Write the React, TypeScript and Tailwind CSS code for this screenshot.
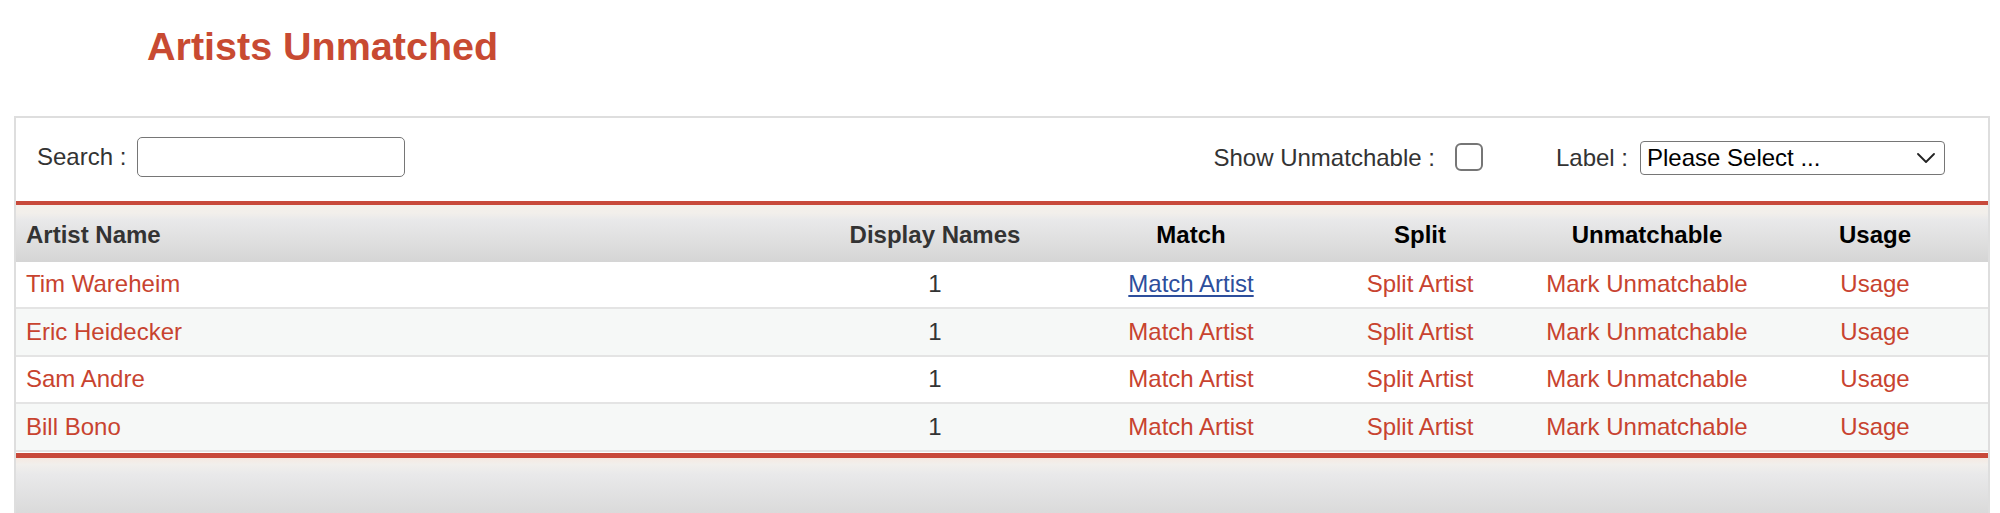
import React from "react";

type ArtistRow = {
  name: string;
  displayNames: number;
};

const ARTISTS: ArtistRow[] = [
  { name: "Tim Wareheim", displayNames: 1 },
  { name: "Eric Heidecker", displayNames: 1 },
  { name: "Sam Andre", displayNames: 1 },
  { name: "Bill Bono", displayNames: 1 },
];

const COLS = "grid grid-cols-[780px_278px_234px_224px_230px_226px]";
const LINK = "text-[#c8432f]";

export default function App() {
  return (
    <div className="h-[513px] w-[2000px] overflow-hidden bg-white font-['Liberation_Sans',Arial,sans-serif] text-[24px] text-[#333]">
      <h1 className="mt-[27px] pl-[147px] text-[39.5px] font-bold leading-none text-[#c84a32]">
        Artists Unmatched
      </h1>

      <div className="mt-[49px] ml-[14px] w-[1976px] border-2 border-b-0 border-[#dedede]">
        <Toolbar />
        <TableHeader />
        {ARTISTS.map((artist, i) => (
          <Row key={artist.name} artist={artist} index={i} />
        ))}
        <div className="mt-[1px] h-[70px] border-t-[5px] border-[#c8493a] bg-[linear-gradient(to_bottom,#f5e9e2_0%,#f1efec_10%,#e9e9ea_25%,#d6d6d6_100%)]" />
      </div>
    </div>
  );
}

function Toolbar() {
  return (
    <div className="flex h-[83px] items-center pr-[43px] pb-[4px] pl-[21px]">
      <span>Search :</span>
      <input
        type="text"
        className="ml-[11px] h-[40px] w-[268px] rounded-[5px] border-[1.5px] border-[#767676] bg-white outline-none"
      />
      <div className="flex-1" />
      <span className="mt-[1px]">Show Unmatchable :</span>
      <div className="ml-[20px] h-[28px] w-[28px] rounded-[6px] border-2 border-[#767676] bg-white" />
      <span className="ml-[73px] mt-[1px]">Label :</span>
      <div className="ml-[12px] mt-[2px] flex h-[34px] w-[305px] items-center rounded-[4px] border-[1.5px] border-[#767676] bg-white pr-[9px] pl-[6px] text-black">
        <span className="flex-1">Please Select ...</span>
        <svg width="18" height="10" viewBox="0 0 18 10" fill="none">
          <path
            d="M1 1l8 8 8-8"
            stroke="#222"
            strokeWidth="1.8"
            strokeLinecap="round"
            strokeLinejoin="round"
          />
        </svg>
      </div>
    </div>
  );
}

function TableHeader() {
  return (
    <div
      className={
        COLS +
        " h-[61px] border-t-4 border-[#c8493a] bg-[linear-gradient(to_bottom,#f4efe9_0%,#f2efeb_14%,#e9e9ea_26%,#d5d5d5_100%)] pt-[4px] font-bold"
      }
    >
      <div className="flex items-center pl-[10px] text-[#333]">Artist Name</div>
      <div className="flex items-center justify-center text-[#333]">
        Display Names
      </div>
      <div className="flex items-center justify-center text-black">Match</div>
      <div className="flex items-center justify-center text-black">Split</div>
      <div className="flex items-center justify-center text-black">
        Unmatchable
      </div>
      <div className="flex items-center justify-center text-black">Usage</div>
    </div>
  );
}

function Row(props: { artist: ArtistRow; index: number }) {
  const striped = props.index % 2 === 1;
  // the first row's match link is shown in its hovered state
  const hovered = props.index === 0;

  return (
    <div
      className={
        COLS +
        " border-b-2 border-[#e4e4e4] " +
        (striped ? "h-[48px] bg-[#f6f8f7]" : "h-[47px] bg-white")
      }
    >
      <div className={"flex items-center pl-[10px] " + LINK}>
        {props.artist.name}
      </div>
      <div className="flex items-center justify-center">
        {props.artist.displayNames}
      </div>
      <div className="flex items-center justify-center">
        {hovered ? (
          <span className="text-[#2d4e9c] underline decoration-2 underline-offset-[3px]">
            Match Artist
          </span>
        ) : (
          <span className={LINK}>Match Artist</span>
        )}
      </div>
      <div className={"flex items-center justify-center " + LINK}>
        Split Artist
      </div>
      <div className={"flex items-center justify-center " + LINK}>
        Mark Unmatchable
      </div>
      <div className={"flex items-center justify-center " + LINK}>Usage</div>
    </div>
  );
}
